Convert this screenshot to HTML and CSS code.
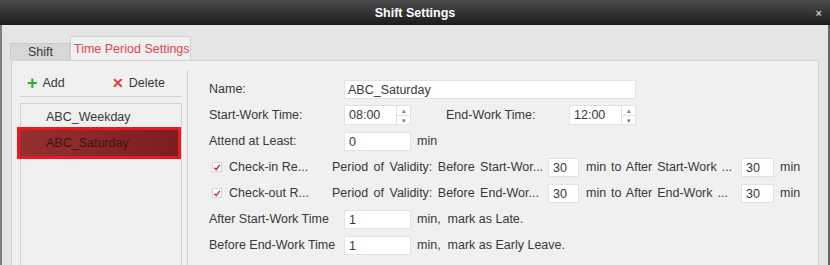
FILE: index.html
```html
<!DOCTYPE html>
<html lang="en">
<head>
  <meta charset="UTF-8">
  <title>Shift Settings</title>
  <link rel="stylesheet" href="styles.css">
</head>
<body>

  <div class="window">
    <div class="titlebar">
      <span></span>
      <span class="title">Shift Settings</span>
      <span class="close">&#215;</span>
    </div>

    <div class="body">
      <div class="tabs">
        <div class="tab">Shift</div>
        <div class="tab active">Time Period Settings</div>
      </div>

      <div class="panel">
        <div class="side">
          <div class="toolbar">
            <span class="tool"><span class="plus">+</span>Add</span>
            <span class="tool"><span class="cross">&#10005;</span>Delete</span>
          </div>
          <div class="list">
            <div class="item">ABC_Weekday</div>
            <div class="item selected">ABC_Saturday</div>
          </div>
        </div>

        <div class="form">
          <div class="row">
            <span class="label">Name:</span>
            <span class="field name">ABC_Saturday</span>
          </div>

          <div class="row">
            <span class="label">Start-Work Time:</span>
            <span class="field time">08:00<span class="spin"><i>&#9652;</i><i>&#9662;</i></span></span>
            <span class="label end">End-Work Time:</span>
            <span class="field time">12:00<span class="spin"><i>&#9652;</i><i>&#9662;</i></span></span>
          </div>

          <div class="row">
            <span class="label">Attend at Least:</span>
            <span class="field short">0</span>
            <span class="unit">min</span>
          </div>

          <div class="row">
            <span class="check"><span class="box"><svg width="9" height="9" viewBox="0 0 9 9"><path d="M1.5 4.8 L3.6 7 L7.6 1.6" fill="none" stroke="#d8262e" stroke-width="1.6"/></svg></span>Check-in Re...</span>
            <span class="validity">Period of Validity: Before Start-Wor...</span>
            <span class="field tiny">30</span>
            <span class="after">min to After Start-Work ...</span>
            <span class="field tiny2">30</span>
            <span class="unit">min</span>
          </div>

          <div class="row">
            <span class="check"><span class="box"><svg width="9" height="9" viewBox="0 0 9 9"><path d="M1.5 4.8 L3.6 7 L7.6 1.6" fill="none" stroke="#d8262e" stroke-width="1.6"/></svg></span>Check-out R...</span>
            <span class="validity">Period of Validity: Before End-Wor...</span>
            <span class="field tiny">30</span>
            <span class="after">min to After End-Work ...</span>
            <span class="field tiny2">30</span>
            <span class="unit">min</span>
          </div>

          <div class="row">
            <span class="label">After Start-Work Time</span>
            <span class="field short">1</span>
            <span class="unit">min,&nbsp; mark as Late.</span>
          </div>

          <div class="row">
            <span class="label">Before End-Work Time</span>
            <span class="field short">1</span>
            <span class="unit">min,&nbsp; mark as Early Leave.</span>
          </div>
        </div>
      </div>
    </div>
  </div>

</body>
</html>
```

FILE: styles.css
```css
body {
  margin: 0;
  width: 830px;
  height: 265px;
  overflow: hidden;
  font-family: "Liberation Sans", Arial, sans-serif;
  font-size: 12.5px;
  color: #383838;
}
.window {
  height: 265px;
  display: flex;
  flex-direction: column;
  background: #e5e5e5;
  border-left: 2px solid #7c7c7c;
  border-right: 2px solid #666;
  box-sizing: border-box;
}
.titlebar {
  height: 25px;
  flex: none;
  display: grid;
  grid-template-columns: 1fr auto 1fr;
  align-items: center;
  background: linear-gradient(#4c4c4c, #1c1c1c);
  margin: 0 -2px;
}
.title {
  color: #fff;
  font-weight: bold;
}
.close {
  justify-self: end;
  margin-right: 8px;
  color: #c4c4c4;
  font-size: 11px;
  font-weight: bold;
}
.body {
  flex: 1;
  display: flex;
  flex-direction: column;
  padding: 11px 9px 0 8px;
  min-height: 0;
}
.tabs {
  display: flex;
  align-items: flex-end;
  height: 24px;
  flex: none;
}
.tab {
  height: 17px;
  width: 60px;
  box-sizing: border-box;
  padding-left: 17px;
  line-height: 17px;
  background: #d7d7d7;
  border: 1px solid #cbcbcb;
  border-bottom: none;
}
.tab.active {
  height: 24px;
  width: 121px;
  padding-left: 3px;
  line-height: 24px;
  background: #f0f0f0;
  color: #e2474e;
  border-color: #d2d2d2;
}
.panel {
  flex: 1;
  display: flex;
  background: #f0f0f0;
  border: 1px solid #d4d4d4;
  border-bottom: none;
  margin-left: 1px;
}
.side {
  width: 176px;
  margin-top: 9px;
  padding: 0 5px 0 8px;
  box-sizing: border-box;
  border-right: 1px solid #d0d0d0;
  display: flex;
  flex-direction: column;
}
.toolbar {
  height: 26px;
  display: flex;
  align-items: center;
  gap: 47px;
  border-bottom: 1px solid #d4d4d4;
  padding-left: 7px;
}
.tool {
  display: flex;
  align-items: center;
}
.plus {
  color: #3aa83a;
  font-weight: bold;
  font-size: 18px;
  margin-right: 5px;
  line-height: 1;
}
.cross {
  color: #e23b3b;
  font-size: 14px;
  font-weight: bold;
  margin-right: 5px;
}
.list {
  flex: 1;
  margin-top: 6px;
  border: 1px solid #d2d2d2;
  border-bottom: none;
  padding-top: 2px;
}
.item {
  height: 22px;
  line-height: 22px;
  padding-left: 25px;
}
.item.selected {
  height: 26px;
  line-height: 26px;
  margin: -1px 0 0 -4px;
  padding-left: 26px;
  border: 3px solid #ea1820;
  background: linear-gradient(90deg, #95302f, #7d1d1f);
  color: #3a1414;
}
.form {
  flex: 1;
  padding: 15px 0 0 21px;
}
.row {
  height: 26px;
  display: flex;
  align-items: center;
}
.label {
  width: 135px;
  flex: none;
}
.label.end {
  width: 123px;
  margin-left: 35px;
}
.field {
  height: 19px;
  line-height: 19px;
  box-sizing: border-box;
  background: #fff;
  border: 1px solid #e2e2e2;
  padding-left: 3px;
  flex: none;
}
.name {
  width: 292px;
}
.short {
  width: 67px;
  padding-left: 4px;
}
.time {
  width: 67px;
  height: 20px;
  display: flex;
  padding-left: 4px;
}
.spin {
  margin-left: auto;
  width: 13px;
  display: flex;
  flex-direction: column;
  border-left: 1px solid #e2e2e2;
}
.spin i {
  flex: 1;
  font-style: normal;
  font-size: 7px;
  line-height: 9px;
  text-align: center;
  color: #777;
}
.spin i + i {
  border-top: 1px solid #e2e2e2;
}
.unit {
  margin-left: 6px;
}
.check {
  width: 123px;
  flex: none;
  display: flex;
  align-items: center;
}
.box {
  width: 10px;
  height: 10px;
  margin: 0 7px 0 3px;
  box-sizing: border-box;
  border: 1px solid #d6d6d6;
  background: #fff;
  display: flex;
  align-items: center;
  justify-content: center;
}
.validity {
  width: 216px;
  flex: none;
  word-spacing: 2px;
}
.tiny {
  width: 31px;
  padding-left: 4px;
}
.after {
  width: 155px;
  margin-left: 7px;
  flex: none;
  word-spacing: 1.5px;
}
.tiny2 {
  width: 33px;
  padding-left: 4px;
}
```
